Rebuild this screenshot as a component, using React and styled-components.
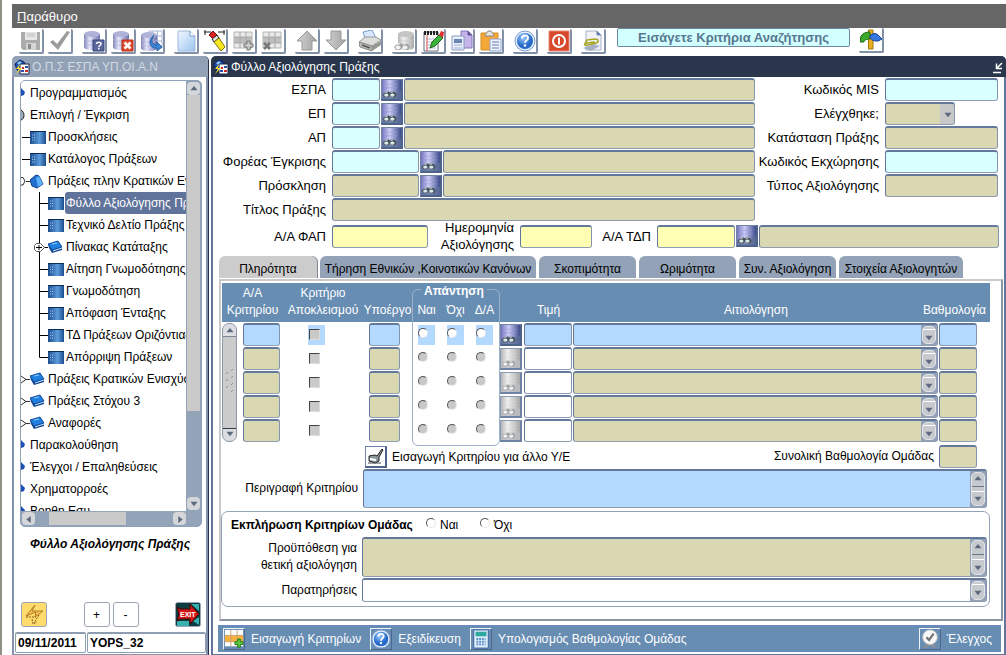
import React from "react";
import styled, { createGlobalStyle, css } from "styled-components";

const GlobalStyle = createGlobalStyle`
  *, *::before, *::after { box-sizing: border-box; }
  body { margin: 0; background: #fff; }
  body, button, input, select, textarea {
    font-family: "Liberation Sans", Arial, sans-serif;
    font-size: 12px;
    color: #000;
  }
  button { padding: 0; cursor: default; }
  input:focus, textarea:focus { outline: none; }
  table { border-collapse: collapse; }
`;

const tones = {
  cyan: "#d9ffff",
  khaki: "#d9d8b2",
  yellow: "#ffffb3",
  blue: "#b3d9ff",
  white: "#ffffff",
};

const frame = css`
  border: 1px solid;
  border-top-width: 2px;
  border-color: #63789b #8494ae #8f9db2 #63789b;
  border-radius: 3px;
`;

/* ---------- shell ---------- */

const Page = styled.div`
  display: flex;
  flex-direction: column;
  min-height: 100vh;
  padding: 4px 0 0 10px;
  border-left: 2px solid #8f8f85;
`;

const MenuBar = styled.nav`
  display: flex;
  align-items: center;
  height: 24px;
  padding: 0 5px;
  background: #666;
`;

const MenuItem = styled.button`
  border: 0;
  background: none;
  color: #fff;
  font-size: 13px;
  &::first-letter { text-decoration: underline; }
`;

const Toolbar = styled.div`
  display: flex;
  align-items: flex-start;
  gap: 9px;
  height: 28px;
  padding: 0 7px;
`;

const ToolGroup = styled.div`
  display: flex;
  gap: 4px;
  padding-top: 1px;
`;

const ToolButton = styled.button`
  display: grid;
  place-items: center;
  width: 25px;
  height: 25px;
  border: 0;
  border-right: 2px solid #8391a8;
  border-bottom: 2px solid #8391a8;
  border-radius: 2px;
  background: #fff;
`;

const Message = styled.input`
  width: 233px;
  height: 19px;
  margin-left: 2px;
  padding: 0;
  border: 1px solid #6d88a4;
  border-radius: 2px;
  background: #d2ffff;
  color: #587790;
  font-size: 13px;
  font-weight: bold;
  text-align: center;
`;

const Windows = styled.main`
  display: grid;
  grid-template-columns: 196px minmax(0, 1fr);
  gap: 3px;
  flex: 1;
`;

const Window = styled.section`
  display: flex;
  flex-direction: column;
  border: 2px solid ${(p) => (p.$active ? "#63759a" : "#8492ac")};
  border-top: 0;
  border-radius: 5px 5px 0 0;
  box-shadow: ${(p) => (p.$active ? "none" : "1px 0 0 #26334a")};
`;

const TitleBar = styled.header`
  display: flex;
  align-items: center;
  gap: 2px;
  height: 21px;
  margin: 0 -2px;
  padding: 0 2px;
  border-radius: 5px 5px 0 0;
  background: ${(p) => (p.$active ? "#29364c" : "#92a1b6")};
  color: ${(p) => (p.$active ? "#fff" : "#d3dae3")};
`;

const WindowTitle = styled.h1`
  flex: 1;
  margin: 0;
  font-size: 12px;
  font-weight: normal;
`;

const PlainButton = styled.button`
  display: grid;
  place-items: center;
  border: 0;
  background: none;
`;

/* ---------- navigator ---------- */

const TreeBox = styled.div`
  display: flex;
  flex-direction: column;
  flex: 1 1 0;
  min-height: 0;
  margin: 3px 4px 0 6px;
  overflow: hidden;
  border: 1px solid #8fa0b8;
  border-radius: 5px;
  background: #93a4b9;
`;

const TreeUpper = styled.div`
  display: flex;
  flex: 1 1 0;
  min-height: 0;
`;

const TreeList = styled.ul`
  flex: 1;
  min-width: 0;
  margin: 0;
  padding: 1px 0 0;
  overflow: hidden;
  list-style: none;
  background: #fff;
`;

const TreeRow = styled.li`
  display: flex;
  align-items: center;
  height: 22px;
  svg { flex: none; }
`;

const TreeLabel = styled.button`
  flex: ${(p) => (p.$selected ? "1 0 auto" : "none")};
  height: 22px;
  padding: 0 1px;
  margin-left: ${(p) => p.$indent}px;
  border: 0;
  border-radius: 3px;
  background: ${(p) => (p.$selected ? "#60739a" : "none")};
  color: ${(p) => (p.$selected ? "#fff" : "#000")};
  text-align: left;
  white-space: nowrap;
`;

const VBar = styled.div`
  display: flex;
  flex-direction: column;
  width: 15px;
  padding: 1px;
`;

const HBar = styled.div`
  display: flex;
  height: 15px;
  padding: 1px 15px 1px 1px;
`;

const BarButton = styled.button`
  display: grid;
  place-items: center;
  flex: none;
  width: 13px;
  height: 13px;
  border: 0;
  border-radius: 4px;
  background: #d4d6da;
`;

const BarThumb = styled.div`
  flex: ${(p) => p.$grow} 1 0;
  background: #cacaca;
`;

const BarSpace = styled.div`
  flex: ${(p) => p.$grow} 1 0;
`;

const Caption = styled.h2`
  margin: 10px 0 51px;
  font-size: 12px;
  line-height: 14px;
  font-style: italic;
  text-align: center;
`;

const NavButtons = styled.div`
  display: flex;
  justify-content: space-between;
  padding: 0 5px 0 7px;
`;

const NavPair = styled.div`
  display: flex;
  gap: 3px;
`;

const NavButton = styled.button`
  display: grid;
  place-items: center;
  width: 26px;
  height: 25px;
  border: 1px solid #9aa3b5;
  border-radius: 3px;
  background: ${(p) => p.$fill || "#fff"};
  overflow: hidden;
`;

const StatusRow = styled.div`
  display: grid;
  grid-template-columns: 71px 1fr;
  gap: 1px;
  margin-top: 5px;
  padding: 0 0 1px 1px;
`;

const StatusField = styled.input`
  min-width: 0;
  height: 21px;
  padding: 0 2px;
  border: 1px solid #8f9db2;
  border-top-width: 2px;
  border-radius: 2px;
  font-weight: bold;
`;

/* ---------- form ---------- */

const FormArea = styled.div`
  display: grid;
  grid-template-columns: minmax(0, 1fr) 249px;
  padding-top: 1px;
`;

const Stack = styled.div`
  display: flex;
  flex-direction: column;
  gap: 1px;
`;

const Row = styled.div`
  display: flex;
  align-items: center;
  gap: 1px;
  height: 23px;
`;

const Label = styled.label`
  flex: none;
  width: ${(p) => p.$w}px;
  margin-right: 5px;
  font-size: ${(p) => (p.$large ? 13 : 12)}px;
  line-height: 17px;
  text-align: right;
  white-space: nowrap;
`;

const Field = styled.input`
  ${frame}
  ${(p) => (p.$w ? `flex: none; width: ${p.$w}px;` : "flex: 1; min-width: 0;")}
  height: 23px;
  padding: 0 2px;
  background: ${(p) => tones[p.$tone]};
`;

const LookupButton = styled.button`
  display: grid;
  place-items: center;
  flex: none;
  width: 22px;
  height: 22px;
  border: 1px solid #7184a6;
  border-right: 2px solid #4d638c;
  border-bottom: 2px solid #4d638c;
  background: #fff;
  &:disabled { border-color: #8a9ab4 #6e82a4 #6e82a4 #8a9ab4; }
`;

const SelectWrap = styled.span`
  position: relative;
  width: 70px;
  height: 23px;
  svg { position: absolute; right: 3px; top: 9px; pointer-events: none; }
`;

const Select = styled.select`
  ${frame}
  appearance: none;
  width: 70px;
  height: 23px;
  background: linear-gradient(to right, #d9d8b2 54px, #c8c8c8 54px);
`;

const DatesRow = styled.div`
  display: flex;
  align-items: center;
  gap: 1px;
  height: 30px;
  padding-right: 5px;
`;

/* ---------- tabs ---------- */

const Tabs = styled.div`
  display: flex;
  gap: 3px;
  padding: 5px 0 1px 6px;
`;

const Tab = styled.button`
  width: ${(p) => p.$w}px;
  height: 22px;
  padding: 3px 0 0;
  border: 0;
  border-radius: 6px 6px 0 0;
  background: ${(p) => (p.$active ? "#ccc" : "#93a2b7")};
  box-shadow: ${(p) => (p.$active ? "1px 0 0 #7c8698" : "none")};
  white-space: nowrap;
`;

const Panel = styled.div`
  margin: 0 1px 0 6px;
  padding: 2px 11px 12px 1px;
  border: 2px solid;
  border-color: #c9c9c9 #8c94a2 #8c94a2 #c9c9c9;
`;

const GridWrap = styled.div`
  position: relative;
`;

const Grid = styled.table`
  table-layout: fixed;
  width: 100%;
  th, td { padding: 0; }
  th {
    height: 39px;
    padding-bottom: 3px;
    background: #678db3;
    color: #fff;
    font-weight: normal;
    line-height: 17px;
    vertical-align: bottom;
    white-space: nowrap;
  }
  td {
    height: 24px;
    padding-top: 1px;
    vertical-align: top;
  }
`;

const HeadRight = styled.div`
  display: flex;
  justify-content: flex-end;
  padding-right: 4px;
`;

const Cell = styled.div`
  display: flex;
  align-items: center;
  height: 23px;
  padding: 0 ${(p) => p.$pr || 0}px 0 ${(p) => p.$pl || 0}px;
`;

const Highlight = styled.span`
  display: flex;
  align-items: flex-start;
  width: 17px;
  height: 20px;
  padding: ${(p) => (p.$box ? "4px 0 0 1px" : "3px 0 0 0")};
  background: ${(p) => (p.$on ? "#b3d9ff" : "transparent")};
`;

const Check = styled.input`
  appearance: none;
  width: 11px;
  height: 11px;
  margin: 0;
  border: 1px solid;
  border-color: #444 #ddd #ddd #444;
  background: #c9c9c9;
`;

const Radio = styled.input`
  appearance: none;
  flex: none;
  width: 10px;
  height: 10px;
  margin: 0;
  border: 1px solid;
  border-color: #555 #e6e6e6 #e6e6e6 #555;
  border-radius: 50%;
  background: ${(p) => (p.$off ? "#c9c9c9" : "#fff")};
`;

const AnswerBox = styled.div`
  position: absolute;
  left: 190px;
  top: 6px;
  bottom: -4px;
  width: 88px;
  border: 1px solid #9db0ca;
  border-radius: 6px;
  pointer-events: none;
`;

const AnswerTitle = styled.span`
  position: absolute;
  left: 8px;
  top: -6px;
  padding: 0 3px;
  background: #678db3;
  color: #fff;
  font-weight: bold;
`;

const LeftBar = styled.div`
  display: flex;
  flex-direction: column;
  align-items: center;
  justify-content: space-between;
  width: 15px;
  height: 119px;
  padding: 3px 0;
  border: 1px solid #8d97a6;
  border-radius: 7px;
  background: linear-gradient(#dcdee2 12px, #7c8698 12px, #7c8698 13px, #cbcbcb 13px, #cbcbcb 104px, #333b4c 104px, #333b4c 105px, #dcdee2 105px);
`;

const TextBox = styled.div`
  ${frame}
  display: flex;
  flex: 1;
  min-width: 0;
  height: ${(p) => p.$h}px;
  background: ${(p) => tones[p.$tone]};
`;

const TextArea = styled.textarea`
  flex: 1;
  min-width: 0;
  padding: 1px 3px;
  border: 0;
  resize: none;
  background: transparent;
  overflow: hidden;
`;

const Strip = styled.span`
  display: flex;
  flex: none;
  width: 16px;
  padding: 1px;
  background: #93a2b7;
`;

const StripBody = styled.span`
  display: flex;
  flex-direction: column;
  align-items: center;
  justify-content: space-around;
  width: 14px;
  border: 1px solid #e2e4e8;
  border-radius: 5px;
  background: #c6c9ce;
`;

const StripLine = styled.span`
  width: 12px;
  height: ${(p) => (p.$tall ? 6 : 2)}px;
  border-top: 1px solid ${(p) => (p.$tall ? "#6b7687" : "#fff")};
  border-bottom: ${(p) => (p.$tall ? "1px solid #fff" : "0")};
`;

const ActionLine = styled.div`
  display: flex;
  align-items: center;
  height: 23px;
  margin-top: 3px;
  padding: 0 13px 0 143px;
`;

const ActionText = styled.span`
  flex: 1;
  padding-left: 5px;
`;

const AreaRow = styled.div`
  display: flex;
  align-items: center;
  margin-top: ${(p) => p.$mt}px;
  padding-right: ${(p) => p.$pr}px;
`;

const Group = styled.div`
  margin: 3px 0 0 -1px;
  padding: 0 1px 4px 0;
  border: 1px solid #93a2b7;
  border-radius: 7px;
`;

const GroupHead = styled.div`
  display: flex;
  align-items: center;
  height: 25px;
  padding-left: 9px;
`;

const GroupTitle = styled.strong`
  width: 195px;
  white-space: nowrap;
`;

const RadioLabel = styled.label`
  display: flex;
  gap: 4px;
  width: 54px;
`;

const BottomBar = styled.footer`
  display: flex;
  align-items: center;
  gap: 9px;
  height: 27px;
  margin: 4px 3px 2px 5px;
  padding: 0 9px 0 5px;
  background: #678db3;
  border-top: 1px solid #6c86c6;
`;

const BarAction = styled.button`
  display: flex;
  align-items: center;
  gap: 6px;
  border: 0;
  background: none;
  color: #fff;
  margin-left: ${(p) => (p.$last ? "auto" : "0")};
`;

const IconPlate = styled.span`
  display: grid;
  place-items: center;
  width: 22px;
  height: 22px;
  border: 1px solid #eef3fa;
  border-right-color: #4b6790;
  border-bottom-color: #4b6790;
`;

/* ---------- drawings ---------- */

const Svg = ({ s = 22, children }) => (
  <svg width={s} height={s} viewBox="0 0 22 22" fill="none" aria-hidden="true">
    {children}
  </svg>
);

const Gradients = () => (
  <svg width="0" height="0" display="block" aria-hidden="true">
    <defs>
      <linearGradient id="violet"><stop offset="0" stopColor="#7c84b8" /><stop offset=".35" stopColor="#e6e6fa" /><stop offset="1" stopColor="#6a72ac" /></linearGradient>
      <linearGradient id="silver"><stop offset="0" stopColor="#b4b4b4" /><stop offset=".35" stopColor="#f0f0f0" /><stop offset="1" stopColor="#a8a8a8" /></linearGradient>
      <linearGradient id="sheet" x2="1" y2="1"><stop offset="0" stopColor="#f2f8ff" /><stop offset="1" stopColor="#9cc4f2" /></linearGradient>
      <linearGradient id="lookup"><stop offset="0" stopColor="#7474bc" /><stop offset=".4" stopColor="#ccccf6" /><stop offset="1" stopColor="#3c4c8c" /></linearGradient>
      <linearGradient id="screen"><stop offset="0" stopColor="#1c4c8c" /><stop offset=".6" stopColor="#5c9cdc" /><stop offset="1" stopColor="#1c4c8c" /></linearGradient>
      <linearGradient id="arrowGray"><stop offset="0" stopColor="#d2d2d2" /><stop offset="1" stopColor="#a2a2a2" /></linearGradient>
      <radialGradient id="globe" cx=".4" cy=".3"><stop offset="0" stopColor="#9cccff" /><stop offset="1" stopColor="#2468c8" /></radialGradient>
    </defs>
  </svg>
);

const Drum = ({ fill, line }) => (
  <>
    <path d="M1 4v13c0 2 3 3 8 3s8-1 8-3V4z" fill={`url(#${fill})`} />
    <ellipse cx="9" cy="4" rx="8" ry="3" fill={line} />
    <path d="M1 9c2 3 14 3 16 0M1 13c2 3 14 3 16 0" stroke={line} opacity=".7" />
  </>
);

const Binoculars = ({ gray }) => (
  <>
    <path d="M1 17l3-3 3-1 2 1 3-1 3 1 2 3-2 3h-3l-3-2-2 2H3z" fill={gray ? "#a2a4a6" : "#46545e"} />
    <ellipse cx="5" cy="17.500" rx="2.500" ry="2" fill={gray ? "#f2f2f2" : "#dce8e8"} />
    <ellipse cx="12" cy="17.500" rx="2.500" ry="2" fill={gray ? "#f2f2f2" : "#dce8e8"} />
    <path d="M4 14.500l3-1M10 14.500l3-1" stroke={gray ? "#fff" : "#e8f0f4"} />
  </>
);

const LookupIcon = ({ gray }) => (
  <svg width="19" height="19" viewBox="0 0 22 22" aria-hidden="true">
    <rect width="22" height="22" fill={gray ? "url(#silver)" : "url(#lookup)"} />
    <path d="M2 5h16M2 9h16" stroke={gray ? "#ddd" : "#9c9cdc"} opacity=".7" />
    <path d="M0 15c6 4 14 2 22-3v10H0z" fill={gray ? "#b8bcc0" : "#5c7098"} opacity=".8" />
    <Binoculars gray={gray} />
  </svg>
);

const HelpIcon = ({ s = 22 }) => (
  <Svg s={s}>
    <circle cx="11" cy="11" r="10" fill="#e4eefa" stroke="#7c9ccc" />
    <circle cx="11" cy="11" r="8" fill="url(#globe)" />
    <path d="M8 8.500c0-4 6-4 6-.5 0 2.200-3 2.200-3 4.800" stroke="#fff" strokeWidth="2" />
    <circle cx="11" cy="15.500" r="1.300" fill="#fff" />
  </Svg>
);

const GridIcon = ({ mark }) => (
  <Svg>
    <path d="M1 2h18v16H1z" fill="#e9e9e9" stroke="#b5b5b5" />
    <path d="M1 7h18v6H1z" fill="#bdbdbd" />
    <path d="M7 2v16M13 2v16M1 7h18M1 13h18" stroke="#a8a8a8" />
    {mark === "plus" && <path d="M14 11h3v3h3v3h-3v3h-3v-3h-3v-3h3z" fill="#ccc" stroke="#777" />}
    {mark === "cross" && <path d="M2 13l6 6M8 13l-6 6" stroke="#777" strokeWidth="2.500" />}
  </Svg>
);

const icons = {
  save: (
    <Svg>
      <path d="M1 2h19v18H3l-2-2z" fill="#acacac" />
      <path d="M5 2h12v8H5z" fill="#e6e6e6" />
      <path d="M7 4h8M7 6h8" stroke="#bbb" />
      <path d="M6 13h10v7H6z" fill="#d5d5d5" />
      <path d="M8 14h3v5H8z" fill="#8c8c8c" />
    </Svg>
  ),
  commit: (
    <Svg><path d="M1 12l3-2 4 4L18 1l3 1L9 20z" fill="#9c9c9c" /></Svg>
  ),
  query: (
    <Svg>
      <Drum fill="violet" line="#b0b2d8" />
      <path d="M10 10h11v11H10z" fill="#59659c" stroke="#38447c" />
      <path d="M13.500 14c0-2.500 4.500-2.500 4.500 0 0 1.500-2.200 1.500-2.200 3.200M15.800 18v1.500" stroke="#fff" strokeWidth="1.500" />
    </Svg>
  ),
  cancelQuery: (
    <Svg>
      <Drum fill="violet" line="#b0b2d8" />
      <path d="M10 10h11v11H10z" fill="#e0492c" stroke="#b02c18" />
      <path d="M12.500 12.500l6 6M18.500 12.500l-6 6" stroke="#fff" strokeWidth="2.500" />
    </Svg>
  ),
  runQuery: (
    <Svg>
      <path d="M8 1h13v17H8z" fill="#fff" stroke="#a8b4d4" />
      <path d="M12 1v17M16.500 1v17M8 6h13M8 11h13" stroke="#a8b4d4" />
      <g transform="translate(-1 1)"><Drum fill="violet" line="#b0b2d8" /></g>
      <path d="M13 5c-4 6-2 10 3 10v-3l5 5-5 4v-3C9 19 6 11 13 5z" fill="#3c84d4" stroke="#2460a8" />
    </Svg>
  ),
  newPage: (
    <Svg>
      <path d="M3 1h12l5 5v15H3z" fill="url(#sheet)" stroke="#9cb8dc" />
      <path d="M15 1v5h5" fill="#fff" stroke="#7c9cc8" />
    </Svg>
  ),
  clear: (
    <Svg>
      <path d="M0 2h7M14 2h7M1 0v5M20 0v5" stroke="#222" />
      <path d="M5 5l4-4 4 4-4 4z" fill="#e02020" stroke="#701010" />
      <path d="M8 9l5-4 2 3-5 4z" fill="#ddd" stroke="#222" />
      <path d="M10 12l5-4 6 9-4 4z" fill="#f6e820" stroke="#80700c" />
    </Svg>
  ),
  addRow: <GridIcon mark="plus" />,
  deleteRow: <GridIcon mark="cross" />,
  up: (
    <Svg><path d="M11 1L1 11h5v9h10v-9h5z" fill="url(#arrowGray)" stroke="#999" /></Svg>
  ),
  down: (
    <Svg><path d="M11 20L1 10h5V1h10v9h5z" fill="url(#arrowGray)" stroke="#999" /></Svg>
  ),
  print: (
    <Svg>
      <path d="M6 9L4 2l9-2 4 8z" fill="#d8e8ff" stroke="#7c9ccc" />
      <path d="M0 12l6-5h11l5 3-9 6z" fill="#dcdeda" stroke="#999" />
      <path d="M0 12l13 4v5L1 17z" fill="#bcbeba" stroke="#888" />
      <path d="M13 16l9-5v4l-9 6z" fill="#94968f" />
      <path d="M3 15l8 3" stroke="#555" strokeWidth="1.500" />
    </Svg>
  ),
  findDb: (
    <Svg>
      <g transform="translate(4 0)"><Drum fill="silver" line="#c4c4c4" /></g>
      <Binoculars gray />
    </Svg>
  ),
  note: (
    <Svg>
      <path d="M2 2h14v19H2z" fill="#fff" stroke="#667" />
      <path d="M2 3h15" stroke="#222" strokeWidth="4" strokeDasharray="2 1" />
      <path d="M4 9h10M4 12h10M4 15h10M4 18h10" stroke="#b0b8d8" />
      <path d="M5 5v16" stroke="#e05050" />
      <path d="M8 18l2-6 7-7 4 3-8 8z" fill="#3cb43c" stroke="#186818" />
      <path d="M17 5l2-4 3 1-1 6z" fill="#e03030" />
    </Svg>
  ),
  copy: (
    <Svg>
      <path d="M10 1h7l4 4v13H10z" fill="#c4b4e8" stroke="#8474bc" />
      <path d="M17 1v4h4" fill="#6454a0" stroke="#6454a0" />
      <path d="M1 6h12v14H1z" fill="#e8f0fc" stroke="#8c9cc4" />
      <path d="M3 9h8v4H3z" fill="#6c84b4" />
      <path d="M3 15h8M3 18h8" stroke="#a4b4d4" />
    </Svg>
  ),
  paste: (
    <Svg>
      <path d="M1 3h17v17H1z" fill="#f4a838" stroke="#d08c20" />
      <path d="M5 6c0-3 2-2 3-5h3c1 3 3 2 3 5z" fill="#e4e4e4" stroke="#888" />
      <path d="M10 9h11v12H10z" fill="#eef3ff" stroke="#94a4cc" />
      <path d="M12 12h7M12 15h7M12 18h7" stroke="#94a4cc" strokeWidth="1.500" />
    </Svg>
  ),
  help: <HelpIcon />,
  exit: (
    <Svg>
      <path d="M1 1h20v20H1z" fill="#d8482c" stroke="#e08470" />
      <circle cx="11" cy="11" r="6" stroke="#fff" strokeWidth="2" />
      <path d="M11 7.500v7" stroke="#fff" strokeWidth="2" />
    </Svg>
  ),
  attach: (
    <Svg>
      <path d="M4 1h11l4 4v15H4z" fill="#f0f2f8" stroke="#a4b0cc" />
      <path d="M15 1v4h4" fill="#5c70ac" stroke="#7c8cac" />
      <path d="M1 18l11-4 6 2-9 5z" fill="#a8b0c4" />
      <path d="M3 13l2-3 8-1c4 0 4 3 1 4l-8 2c-4 1-5-1-1-2l8-1" stroke="#a8a828" strokeWidth="1.500" />
    </Svg>
  ),
  signpost: (
    <Svg>
      <path d="M8.500 1h4.500v19H8.500z" fill="#e8b020" stroke="#a07810" />
      <path d="M0 13l1-6c2-3 5-4 9-4v7c-3 0-6 1-6 3z" fill="#3ca82c" stroke="#1c6c14" />
      <path d="M10 7c2-3 6-3 8-1l4 4-4 2c-3 0-6 0-8-3z" fill="#3478e0" stroke="#183c90" />
    </Svg>
  ),
};

const AppMark = () => (
  <svg width="16" height="16" viewBox="0 0 16 16" aria-hidden="true">
    <path d="M1 5l5-4 4 2 2 4-4 5-5-1z" fill="#1c50b4" stroke="#0c2464" />
    <path d="M3 4l3-2 2 2-3 2z" fill="#8cc8f4" />
    <path d="M6 5h9v10H6z" fill="#fff" stroke="#14244c" />
    <path d="M8 8h2v2H8zM11 11h3v2h-3z" fill="#d02828" />
    <path d="M11 7h3v2h-3zM7 11h3v2H7z" fill="#3050b0" />
    <path d="M6 5L2 10h3l-3 5 6-6H5z" fill="#ffe030" />
  </svg>
);

const Arrow = ({ dir = "down" }) => {
  const paths = { down: "M0 1h8L4 6z", up: "M0 5h8L4 0z", left: "M6 0v8L1 4z", right: "M2 0v8l5-4z" };
  return <svg width="8" height="8" viewBox="0 -1 8 9" aria-hidden="true"><path d={paths[dir]} fill="#5c687c" /></svg>;
};

const ScreenIcon = () => (
  <svg width="16" height="13" viewBox="0 0 16 13" aria-hidden="true">
    <rect width="16" height="13" fill="url(#screen)" />
    <path d="M2 4h4M2 6.500h4M2 9h4" stroke="#9cc8f4" strokeDasharray="1 1" />
    <path d="M0 0h16" stroke="#0c2c5c" strokeWidth="2" />
  </svg>
);

const BookIcon = ({ open }) => (
  <svg width="15" height="15" viewBox="0 0 15 15" aria-hidden="true">
    {open ? (
      <>
        <path d="M0 6l6-5 3 1 4 8-6 4-5-2z" fill="#2070d0" stroke="#103c84" />
        <path d="M6 4l3-2 4 8-5 3z" fill="#5cb0f8" />
      </>
    ) : (
      <>
        <path d="M0 4l10-3 4 6-10 3z" fill="#2080e0" stroke="#104c9c" />
        <path d="M0 4l4 6 10-3v3L4 13 1 8z" fill="#0c4494" />
        <path d="M5 11l9-3" stroke="#cfe6ff" />
        <path d="M4 4l5-1" stroke="#8cccff" />
      </>
    )}
  </svg>
);

const Branch = ({ kind }) => {
  if (kind === "stub" || kind === "bud")
    return (
      <svg width="5" height="22" viewBox="0 0 5 22" aria-hidden="true">
        {kind === "stub" ? <path d="M0 6l4 4-1 3-3 1z" fill="#1c50b4" /> : <path d="M0 6c4 2 4 9 0 10" stroke="#222" fill="#9ab" />}
      </svg>
    );
  const wide = kind === "mid" || kind === "last" || kind === "plus";
  return (
    <svg width={wide ? 27 : 9} height="22" viewBox={`0 0 ${wide ? 27 : 9} 22`} fill="none" stroke="#000" aria-hidden="true">
      {kind === "dash" && <path d="M1 11.500h8" />}
      {kind === "open" && <path d="M0 7.500h2l2 3.500-2 4H0M5 11.500h4" stroke="#333" />}
      {kind === "closed" && <path d="M0 8l5 3.500-5 3.500M5 11.500h4" stroke="#333" />}
      {kind === "mid" && <path d="M18.500 0v22M18.500 11.500H27" />}
      {kind === "last" && <path d="M18.500 0v11.500H27" />}
      {kind === "plus" && (
        <>
          <path d="M18.500 0v22M20 11.500h7" />
          <path d="M15.500 7.500h4l4 4-4 4h-4l-2-2v-4z" fill="#fff" stroke="#555" />
          <path d="M15 11.500h6M18 9v5" />
        </>
      )}
    </svg>
  );
};

/* ---------- data ---------- */

const treeRows = [
  ["stub", null, "Προγραμματισμός"],
  ["bud", null, "Επιλογή / Έγκριση"],
  ["dash", "screen", "Προσκλήσεις"],
  ["dash", "screen", "Κατάλογος Πράξεων"],
  ["open", "bookOpen", "Πράξεις πλην Κρατικών Ενισχύσεων"],
  ["mid", "screen", "Φύλλο Αξιολόγησης Πράξης"],
  ["mid", "screen", "Τεχνικό Δελτίο Πράξης"],
  ["plus", "book", "Πίνακας Κατάταξης"],
  ["mid", "screen", "Αίτηση Γνωμοδότησης"],
  ["mid", "screen", "Γνωμοδότηση"],
  ["mid", "screen", "Απόφαση Ένταξης"],
  ["mid", "screen", "ΤΔ Πράξεων Οριζόντιας"],
  ["last", "screen", "Απόρριψη Πράξεων"],
  ["closed", "book", "Πράξεις Κρατικών Ενισχύσεων"],
  ["closed", "book", "Πράξεις Στόχου 3"],
  ["closed", "book", "Αναφορές"],
  ["stub", null, "Παρακολούθηση"],
  ["stub", null, "Έλεγχοι / Επαληθεύσεις"],
  ["stub", null, "Χρηματορροές"],
  ["stub", null, "Βοηθη Εσυ"],
];

const toolGroups = [
  [["save", "Αποθήκευση"], ["commit", "Επιβεβαίωση"]],
  [["query", "Ερώτημα"], ["cancelQuery", "Ακύρωση ερωτήματος"], ["runQuery", "Εκτέλεση ερωτήματος"]],
  [["newPage", "Νέο"], ["clear", "Καθαρισμός"], ["addRow", "Προσθήκη γραμμής"], ["deleteRow", "Διαγραφή γραμμής"]],
  [["up", "Προηγούμενο"], ["down", "Επόμενο"]],
  [["print", "Εκτύπωση"]],
  [["findDb", "Τιμές"], ["note", "Επεξεργασία"], ["copy", "Αντιγραφή"], ["paste", "Επικόλληση"]],
  [["help", "Βοήθεια"]],
  [["exit", "Έξοδος"]],
  [["attach", "Συνημμένα"]],
];

const tabs = [
  ["Πληρότητα", 98],
  ["Τήρηση Εθνικών ,Κοινοτικών Κανόνων", 216],
  ["Σκοπιμότητα", 97],
  ["Ωριμότητα", 97],
  ["Συν. Αξιολόγηση", 97],
  ["Στοιχεία Αξιολογητών", 124],
];

const Lookup = ({ label, gray }) => (
  <LookupButton type="button" aria-label={label} disabled={gray}><LookupIcon gray={gray} /></LookupButton>
);

const ScrollStrip = ({ full }) => (
  <Strip aria-hidden="true">
    <StripBody>
      {full && <Arrow dir="up" />}
      <StripLine $tall={full} />
      <Arrow />
    </StripBody>
  </Strip>
);

const LookupRow = ({ id, label, tone = "cyan", w }) => (
  <Row>
    <Label htmlFor={id} $w={113} $large>{label}</Label>
    <Field id={id} $tone={tone} $w={w} />
    <Lookup label={`Αναζήτηση ${label}`} />
    <Field aria-label={`${label} περιγραφή`} $tone="khaki" readOnly />
  </Row>
);

const SideRow = ({ id, label, tone, ...rest }) => (
  <Row>
    <Label htmlFor={id} $w={124} $large>{label}</Label>
    <Field id={id} $tone={tone} $w={113} {...rest} />
  </Row>
);

const Navigator = () => (
  <Window>
    <TitleBar><AppMark /><WindowTitle>Ο.Π.Σ ΕΣΠΑ ΥΠ.ΟΙ.Α.Ν</WindowTitle></TitleBar>
    <TreeBox>
      <TreeUpper>
        <TreeList>
          {treeRows.map(([branch, icon, text], i) => (
            <TreeRow key={text}>
              <Branch kind={branch} />
              {icon === "screen" && <ScreenIcon />}
              {icon === "book" && <BookIcon />}
              {icon === "bookOpen" && <BookIcon open />}
              <TreeLabel type="button" $selected={i === 5} $indent={icon === "screen" ? 1 : icon ? 2 : 3}>{text}</TreeLabel>
            </TreeRow>
          ))}
        </TreeList>
        <VBar>
          <BarButton type="button" aria-label="Πάνω"><Arrow dir="up" /></BarButton>
          <BarThumb $grow={146} />
          <BarSpace $grow={40} />
          <BarButton type="button" aria-label="Κάτω"><Arrow /></BarButton>
        </VBar>
      </TreeUpper>
      <HBar>
        <BarButton type="button" aria-label="Αριστερά"><Arrow dir="left" /></BarButton>
        <BarSpace $grow={14} />
        <BarThumb $grow={76} />
        <BarSpace $grow={46} />
        <BarButton type="button" aria-label="Δεξιά"><Arrow dir="right" /></BarButton>
      </HBar>
    </TreeBox>
    <Caption>Φύλλο Αξιολόγησης Πράξης</Caption>
    <NavButtons>
      <NavButton type="button" aria-label="Μετάβαση" $fill="#ffdc6c">
        <svg width="24" height="23" viewBox="0 0 24 23" fill="none" aria-hidden="true">
          <path d="M4 13L13 2l-3 6h11l-8 6 1-5z" fill="#f8c050" stroke="#b07c28" />
          <path d="M4 14h10M17 12l-5 8M10 16l1 5 4-2" stroke="#80581c" strokeDasharray="2 1" />
        </svg>
      </NavButton>
      <NavPair>
        <NavButton type="button">+</NavButton>
        <NavButton type="button">-</NavButton>
      </NavPair>
      <NavButton type="button" aria-label="EXIT" $fill="#101418">
        <svg width="24" height="23" viewBox="0 0 24 23" aria-hidden="true">
          <path d="M0 0h24v23H0z" fill="#0c3c40" />
          <path d="M15 1h8v7zM1 18h12v5H1zM17 18l6-4v8z" fill="#38b0b0" />
          <path d="M1 4l3 2h10V1l9 10-9 10v-5H4l-3 2 2-7z" fill="#d01818" stroke="#400" />
          <text x="4" y="14" fontSize="7" fontWeight="bold" fontFamily="Liberation Sans, sans-serif" fill="#fff">EXIT</text>
        </svg>
      </NavButton>
    </NavButtons>
    <StatusRow>
      <StatusField aria-label="Ημερομηνία" readOnly value="09/11/2011" />
      <StatusField aria-label="Χρήστης" readOnly value="YOPS_32" />
    </StatusRow>
  </Window>
);

const CriteriaGrid = () => (
  <GridWrap>
    <Grid>
      <colgroup>
        {[20, 41, 80, 49, 29, 29, 29, 25, 49, null, 51].map((w, i) => (
          <col key={i} width={w ?? undefined} />
        ))}
      </colgroup>
      <thead>
        <tr>
          <th colSpan={2}>Α/Α<br />Κριτηρίου</th>
          <th>Κριτήριο<br />Αποκλεισμού</th>
          <th>Υποέργο</th>
          <th>Ναι</th>
          <th>Όχι</th>
          <th>Δ/Α</th>
          <th aria-label="Αναζήτηση" />
          <th>Τιμή</th>
          <th>Αιτιολόγηση</th>
          <th><HeadRight>Βαθμολογία</HeadRight></th>
        </tr>
      </thead>
      <tbody>
        {[0, 1, 2, 3, 4].map((n) => {
          const on = n === 0;
          const tone = on ? "blue" : "khaki";
          return (
            <tr key={n}>
              {on && (
                <td rowSpan={5}>
                  <LeftBar aria-hidden="true">
                    <Arrow dir="up" />
                    <svg width="10" height="30" viewBox="0 0 10 30" stroke="#8c929c" aria-hidden="true">
                      <path d="M1 6l2-2M6 3l2-2M1 13l2-2M6 10l2-2M1 20l2-2M6 17l2-2M6 24l2-2" />
                    </svg>
                    <Arrow />
                  </LeftBar>
                </td>
              )}
              <td><Cell $pl={1} $pr={3}><Field aria-label="Α/Α Κριτηρίου" $tone={tone} /></Cell></td>
              <td><Cell $pl={25}><Highlight $on={on} $box><Check type="checkbox" aria-label="Κριτήριο Αποκλεισμού" /></Highlight></Cell></td>
              <td><Cell $pl={6} $pr={12}><Field aria-label="Υποέργο" $tone={tone} /></Cell></td>
              {["Ναι", "Όχι", "Δ/Α"].map((a) => (
                <td key={a}><Cell $pl={6}><Highlight $on={on}><Radio type="radio" name={`answer${n}`} aria-label={a} $off={!on} /></Highlight></Cell></td>
              ))}
              <td><Cell $pl={1}><Lookup label="Αναζήτηση" gray={!on} /></Cell></td>
              <td><Cell $pr={1}><Field aria-label="Τιμή" $tone={on ? "blue" : "white"} /></Cell></td>
              <td>
                <Cell $pr={1}>
                  <TextBox $tone={tone} $h={23}><TextArea aria-label="Αιτιολόγηση" /><ScrollStrip /></TextBox>
                </Cell>
              </td>
              <td><Cell $pr={13}><Field aria-label="Βαθμολογία" $tone={tone} /></Cell></td>
            </tr>
          );
        })}
      </tbody>
    </Grid>
    <AnswerBox><AnswerTitle>Απάντηση</AnswerTitle></AnswerBox>
  </GridWrap>
);

const Evaluation = () => (
  <Window $active>
    <TitleBar $active>
      <AppMark />
      <WindowTitle>Φύλλο Αξιολόγησης Πράξης</WindowTitle>
      <PlainButton type="button" aria-label="Επαναφορά">
        <svg width="12" height="14" viewBox="0 0 12 14" fill="none" stroke="#fff" strokeWidth="1.500" aria-hidden="true">
          <path d="M10 3L5 8M4.500 3.500v5H10M1 12.500h8" />
        </svg>
      </PlainButton>
    </TitleBar>
    <FormArea>
      <Stack>
        <LookupRow id="espa" label="ΕΣΠΑ" w={48} />
        <LookupRow id="ep" label="ΕΠ" w={48} />
        <LookupRow id="ap" label="ΑΠ" w={48} />
        <LookupRow id="body" label="Φορέας Έγκρισης" w={87} />
        <LookupRow id="call" label="Πρόσκληση" tone="khaki" w={87} />
        <Row>
          <Label htmlFor="title" $w={113} $large>Τίτλος Πράξης</Label>
          <Field id="title" $tone="khaki" readOnly />
        </Row>
      </Stack>
      <Stack>
        <SideRow id="mis" label="Κωδικός MIS" tone="cyan" autoFocus />
        <Row>
          <Label htmlFor="checked" $w={124} $large>Ελέγχθηκε;</Label>
          <SelectWrap><Select id="checked"><option /></Select><Arrow /></SelectWrap>
        </Row>
        <SideRow id="state" label="Κατάσταση Πράξης" tone="khaki" readOnly />
        <SideRow id="assign" label="Κωδικός Εκχώρησης" tone="cyan" />
        <SideRow id="kind" label="Τύπος Αξιολόγησης" tone="khaki" readOnly />
      </Stack>
    </FormArea>
    <DatesRow>
      <Label htmlFor="fap" $w={113} $large>Α/Α ΦΑΠ</Label>
      <Field id="fap" $tone="yellow" $w={96} />
      <Label htmlFor="date" $w={85} $large>Ημερομηνία<br />Αξιολόγησης</Label>
      <Field id="date" $tone="yellow" $w={72} />
      <Label htmlFor="tdp" $w={58} $large>Α/Α ΤΔΠ</Label>
      <Field id="tdp" $tone="yellow" $w={78} />
      <Lookup label="Αναζήτηση ΤΔΠ" />
      <Field aria-label="Περιγραφή ΤΔΠ" $tone="khaki" readOnly />
    </DatesRow>
    <Tabs role="tablist">
      {tabs.map(([text, w], i) => (
        <Tab key={text} type="button" role="tab" aria-selected={i === 0} $active={i === 0} $w={w}>{text}</Tab>
      ))}
    </Tabs>
    <Panel>
      <CriteriaGrid />
      <ActionLine>
        <LookupButton type="button" aria-label="Εισαγωγή Κριτηρίου">
          <svg width="18" height="18" viewBox="0 0 18 18" aria-hidden="true">
            <path d="M2 9l6-1 2 1 5-7 1 1-4 7v4l-4 2-6-2z" fill="#8c9898" stroke="#222" />
            <path d="M3 12l6 1" stroke="#fff" strokeWidth="2" />
            <path d="M1 16h13" stroke="#445" />
          </svg>
        </LookupButton>
        <ActionText>Εισαγωγή Κριτηρίου για άλλο Υ/Ε</ActionText>
        <Label htmlFor="total" $w={170}>Συνολική Βαθμολογία Ομάδας</Label>
        <Field id="total" $tone="khaki" $w={38} readOnly />
      </ActionLine>
      <AreaRow $mt={1} $pr={3}>
        <Label htmlFor="descr" $w={136}>Περιγραφή Κριτηρίου</Label>
        <TextBox $tone="blue" $h={39}><TextArea id="descr" /><ScrollStrip full /></TextBox>
      </AreaRow>
      <Group role="group" aria-labelledby="fulfil">
        <GroupHead>
          <GroupTitle id="fulfil">Εκπλήρωση Κριτηρίων Ομάδας</GroupTitle>
          <RadioLabel><Radio type="radio" name="fulfil" />Ναι</RadioLabel>
          <RadioLabel><Radio type="radio" name="fulfil" />Όχι</RadioLabel>
        </GroupHead>
        <AreaRow $mt={0} $pr={1}>
          <Label htmlFor="premise" $w={135}>Προϋπόθεση για<br />θετική αξιολόγηση</Label>
          <TextBox $tone="khaki" $h={40}><TextArea id="premise" /><ScrollStrip full /></TextBox>
        </AreaRow>
        <AreaRow $mt={1} $pr={1}>
          <Label htmlFor="remarks" $w={135}>Παρατηρήσεις</Label>
          <TextBox $tone="white" $h={24}><TextArea id="remarks" /><ScrollStrip /></TextBox>
        </AreaRow>
      </Group>
    </Panel>
    <BottomBar>
      <BarAction type="button">
        <IconPlate>
          <Svg s={20}>
            <path d="M1 1h20v18H1z" fill="#fff" />
            <path d="M1 7h20v7H1z" fill="#f6b040" />
            <path d="M7.500 1v18M14.500 1v18M1 7h20M1 14h20" stroke="#c8a070" />
            <path d="M15 11h3v3h3v3h-3v3h-3v-3h-3v-3h3z" fill="#5cc840" stroke="#207818" />
          </Svg>
        </IconPlate>
        Εισαγωγή Κριτηρίων
      </BarAction>
      <BarAction type="button"><IconPlate><HelpIcon s={20} /></IconPlate>Εξειδίκευση</BarAction>
      <BarAction type="button">
        <IconPlate>
          <Svg s={20}>
            <path d="M3 1h16v20H3z" fill="#dcecf8" stroke="#34609c" />
            <path d="M5 3h12v5H5z" fill="#2ca89c" />
            <path d="M6 11h10M6 14h10M6 17h10" stroke="#5c90cc" strokeWidth="2" strokeDasharray="2 1" />
          </Svg>
        </IconPlate>
        Υπολογισμός Βαθμολογίας Ομάδας
      </BarAction>
      <BarAction type="button" $last>
        <IconPlate>
          <Svg s={20}>
            <path d="M3 21l5-6h6l5 6-5-1-3-2-3 2z" fill="#8c8c94" />
            <circle cx="11" cy="9" r="8" fill="#f8f8f8" stroke="#c8c8c8" />
            <path d="M7 9l3 3 5-7" stroke="#777" strokeWidth="2.500" />
          </Svg>
        </IconPlate>
        Έλεγχος
      </BarAction>
    </BottomBar>
  </Window>
);

export default function App() {
  return (
    <Page>
      <GlobalStyle />
      <Gradients />
      <MenuBar><MenuItem type="button">Παράθυρο</MenuItem></MenuBar>
      <Toolbar>
        {toolGroups.map((group, i) => (
          <ToolGroup key={i}>
            {group.map(([icon, name]) => (
              <ToolButton key={icon} type="button" aria-label={name}>{icons[icon]}</ToolButton>
            ))}
          </ToolGroup>
        ))}
        <Message aria-label="Μήνυμα" readOnly value="Εισάγετε Κριτήρια Αναζήτησης" />
        <ToolButton type="button" aria-label="Πλοήγηση">{icons.signpost}</ToolButton>
      </Toolbar>
      <Windows>
        <Navigator />
        <Evaluation />
      </Windows>
    </Page>
  );
}
